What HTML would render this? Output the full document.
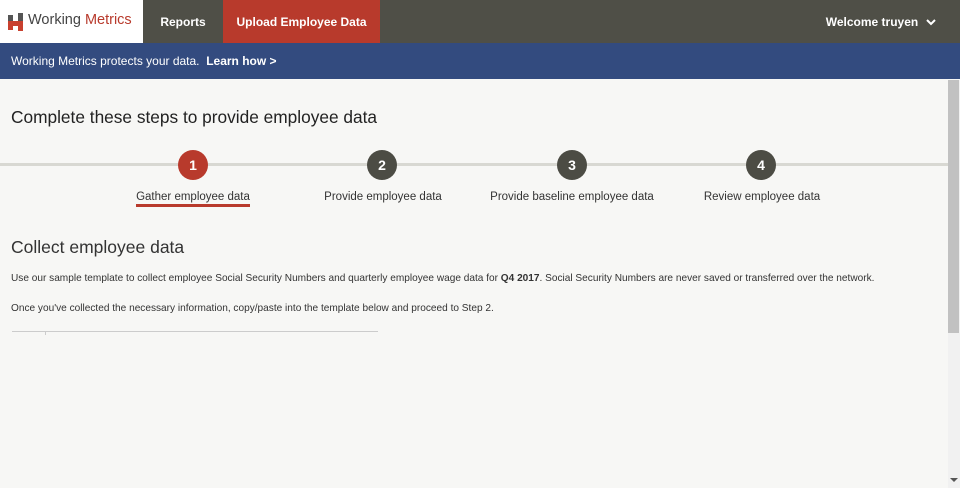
<!DOCTYPE html>
<html><head><style>
*{margin:0;padding:0;box-sizing:border-box}
body{width:960px;height:488px;overflow:hidden;background:#f7f7f5;font-family:"Liberation Sans",sans-serif;position:relative;color:#333}
.top{position:absolute;left:0;top:0;width:960px;height:43px;background:#4f4f47}
.logo{position:absolute;left:0;top:0;width:143px;height:43px;background:#fff}
.logo span{position:absolute;left:28px;top:12px;font-size:14.5px;color:#444}
.logo b{font-weight:normal;color:#b83a2c}
.nav{position:absolute;top:1px;height:43px;line-height:43px;color:#fff;font-weight:bold;font-size:12px;text-align:center}
.banner{position:absolute;left:0;top:43px;width:960px;height:36px;background:#334b7f;color:#fff;font-size:12px;line-height:37px;padding-left:11px}
h1{position:absolute;left:11px;top:107px;font-size:17.3px;font-weight:normal;color:#222}
.line{position:absolute;left:0;top:163px;width:948px;height:3px;background:#d8d8d2}
.c{position:absolute;top:150px;width:30px;height:30px;border-radius:50%;background:#4c4c44;color:#fff;font-weight:bold;font-size:14px;text-align:center;line-height:30px}
.lbl{position:absolute;top:191px;font-size:11.5px;color:#333;text-align:center;width:200px}
h2{position:absolute;left:11px;top:237px;font-size:17.5px;font-weight:normal;color:#333}
p{position:absolute;left:11px;font-size:10.1px;color:#333}
.sb{position:absolute;left:948px;top:80px;width:12px;height:408px;background:#f1f1f1}
.th{position:absolute;left:948px;top:80px;width:11px;height:253px;background:#c1c1c1}
</style></head><body>
<div class="top"></div>
<div class="logo">
<svg style="position:absolute;left:8px;top:13px" width="16" height="18"><rect x="0" y="2" width="5" height="6" fill="#555"/><rect x="10" y="0" width="5" height="8" fill="#555"/><rect x="0" y="8" width="15" height="5" fill="#c8402e"/><rect x="0" y="13" width="5" height="4" fill="#c8402e"/><rect x="10" y="13" width="5" height="5" fill="#c8402e"/></svg>
<span>Working <b>Metrics</b></span></div>
<div class="nav" style="left:143px;width:80px">Reports</div>
<div class="nav" style="left:223px;width:157px;background:#b83a2c;top:0;line-height:44px">Upload Employee Data</div>
<div class="nav" style="left:822px;width:100px">Welcome truyen</div>
<svg style="position:absolute;left:926px;top:19px" width="10" height="7"><path d="M1 1L5 5L9 1" stroke="#fff" stroke-width="2" fill="none"/></svg>
<div class="banner">Working Metrics protects your data.&nbsp; <b>Learn how &gt;</b></div>
<h1>Complete these steps to provide employee data</h1>
<div class="line"></div>
<div class="c" style="left:178px;background:#b83a2c">1</div>
<div class="c" style="left:367px">2</div>
<div class="c" style="left:557px">3</div>
<div class="c" style="left:746px">4</div>
<div class="lbl" style="left:93px">Gather employee data</div>
<div style="position:absolute;left:136px;top:204px;width:114px;height:3px;background:#b83a2c"></div>
<div class="lbl" style="left:283px">Provide employee data</div>
<div class="lbl" style="left:472px">Provide baseline employee data</div>
<div class="lbl" style="left:662px">Review employee data</div>
<h2>Collect employee data</h2>
<p style="top:273px">Use our sample template to collect employee Social Security Numbers and quarterly employee wage data for <b>Q4 2017</b>. Social Security Numbers are never saved or transferred over the network.</p>
<p style="top:303px">Once you've collected the necessary information, copy/paste into the template below and proceed to Step 2.</p>
<div style="position:absolute;left:12px;top:331px;width:366px;height:1px;background:#ccc"></div>
<div style="position:absolute;left:45px;top:331px;width:1px;height:4px;background:#ccc"></div>
<div class="sb"></div><div class="th"></div>
<svg style="position:absolute;left:950px;top:478px" width="8" height="5"><path d="M0 0H8L4 4Z" fill="#555"/></svg>
</body></html>
